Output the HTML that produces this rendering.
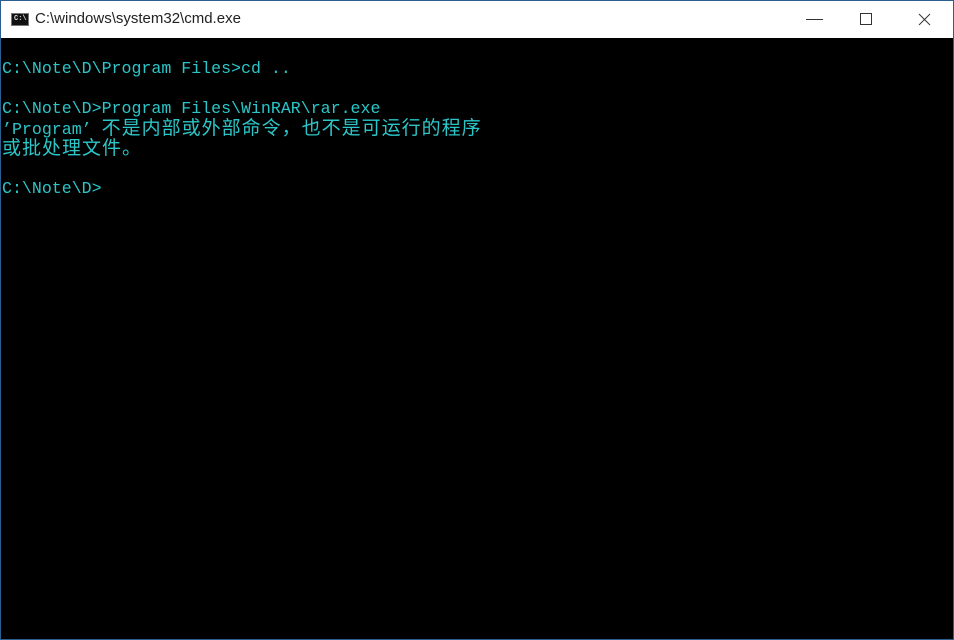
<!DOCTYPE html>
<html><head><meta charset="utf-8"><style>
html,body{margin:0;padding:0;width:954px;height:640px;overflow:hidden;background:#000}
.win{position:absolute;left:0;top:0;width:952px;height:638px;border:1px solid #2b5f8f;background:#000}
.title{position:absolute;left:0;top:0;width:952px;height:37px;background:#fff;}
.title .t{position:absolute;left:34px;top:9px;font:15px "Liberation Sans",sans-serif;color:#222}
.icon{position:absolute;left:10px;top:12px;width:18px;height:13px;background:#111;border:1px solid #777;box-sizing:border-box}
.icon span{position:absolute;left:2px;top:1px;color:#ddd;font:7px "Liberation Mono",monospace;font-weight:bold}
.con{position:absolute;left:1px;top:38px;font-family:"Liberation Mono","Noto Sans CJK SC",monospace;font-size:16.6px;line-height:20px;color:#2cc6c8;white-space:pre}
.con div{height:20px}
.c{letter-spacing:1px;font-size:19px;line-height:20px}
</style></head><body>
<div class="win">
<div class="title"><div class="icon"><span>C:\</span></div><div class="t">C:\windows\system32\cmd.exe</div>
<svg style="position:absolute;left:790px;top:0" width="162" height="37">
<line x1="15" y1="18.5" x2="32" y2="18.5" stroke="#333" stroke-width="1"/>
<rect x="69.5" y="12.5" width="11" height="11" fill="none" stroke="#333"/>
<line x1="128" y1="13" x2="139" y2="24" stroke="#333"/><line x1="139" y1="13" x2="128" y2="24" stroke="#333"/>
</svg></div>
<div class="con"><div></div><div>C:\Note\D\Program Files&gt;cd ..</div><div></div><div>C:\Note\D&gt;Program Files\WinRAR\rar.exe</div><div>’Program’ <span class="c">不是内部或外部命令，也不是可运行的程序</span></div><div><span class="c">或批处理文件。</span></div><div></div><div>C:\Note\D&gt;</div></div>
</div>
</body></html>
